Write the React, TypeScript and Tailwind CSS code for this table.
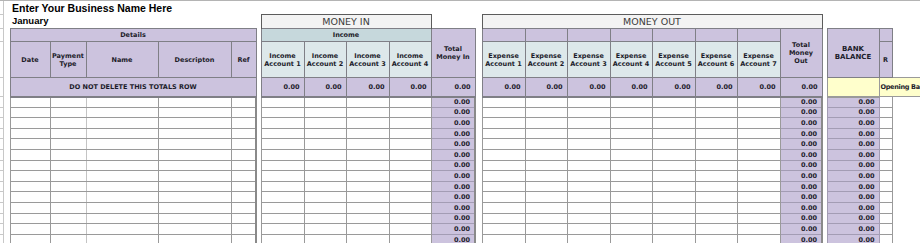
import React from "react";

const FONT = { fontFamily: '"Liberation Sans", Arial, sans-serif' };

const small = "font-['DejaVu_Sans',sans-serif] text-[6.5px] leading-[8px] font-bold text-[#1c1c2a]";
const hd = `border border-[#7f7f86] ${small} text-center align-middle`;
const purple = "bg-[#ccc3de]";
const light = "bg-[#dde8ea]";
const num = `border border-[#7f7f86] bg-[#ccc3de] ${small} text-right pr-1 align-middle`;
const cell = "border border-[#9a9a9a] bg-white";
const stubA = "border-r border-b border-[#c8c8c8]";
const box = "border border-b-0 border-[#5c5c5c] bg-[#f3f3f3] text-center font-['DejaVu_Sans',sans-serif] text-[9.5px] leading-[12px] text-[#3c3c3c]";

const widths = [3, 7, 40, 36, 72, 73, 25, 5, 43, 42, 43, 42, 44, 7, 43, 42, 43, 42, 43, 42, 43, 42, 5, 52, 13, 40];

function Stub() {
    return (
        <>
            <td className={stubA} />
            <td />
        </>
    );
}

export default function App() {
    const rows = Array.from({ length: 14 }, (_, i) => i);
    const expenses = [1, 2, 3, 4, 5, 6, 7];

    return (
        <div className="w-[920px] h-[243px] overflow-hidden bg-white border-t border-[#b4b4b4]" style={FONT}>
            <table className="table-fixed border-collapse w-[932px]">
                <colgroup>
                    {widths.map((w, i) => (
                        <col key={i} style={{ width: w }} />
                    ))}
                </colgroup>
                <tbody>
                    {/* title */}
                    <tr className="h-[13px]">
                        <Stub />
                        <td colSpan={24} className="pl-[2px] pt-[2px] text-[10.5px] leading-[11px] font-bold text-black whitespace-nowrap">
                            Enter Your Business Name Here
                        </td>
                    </tr>

                    {/* month + group boxes */}
                    <tr className="h-[14px]">
                        <Stub />
                        <td colSpan={6} className="pl-[2px] text-[9.5px] leading-[11px] font-bold text-black align-top">
                            January
                        </td>
                        <td colSpan={4} className={box}>MONEY IN</td>
                        <td />
                        <td />
                        <td colSpan={8} className={box}>MONEY OUT</td>
                        <td colSpan={4} />
                    </tr>

                    {/* header row 1 */}
                    <tr className="h-[13px]">
                        <Stub />
                        <td colSpan={5} className={`${hd} ${purple}`}>Details</td>
                        <td />
                        <td colSpan={4} className={`${hd} bg-[#c6d8dc]`}>Income</td>
                        <td rowSpan={2} className={`${hd} ${purple}`}>
                            Total
                            <br />
                            Money In
                        </td>
                        <td />
                        {expenses.map((e) => (
                            <td key={e} className={`${hd} ${purple}`} />
                        ))}
                        <td rowSpan={2} className={`${hd} ${purple}`}>
                            Total
                            <br />
                            Money
                            <br />
                            Out
                        </td>
                        <td />
                        <td rowSpan={2} className={`${hd} ${purple} text-[7px] leading-[8px]`}>
                            BANK
                            <br />
                            BALANCE
                        </td>
                        <td className={`${hd} ${purple}`} />
                        <td />
                    </tr>

                    {/* header row 2 */}
                    <tr className="h-[36px]">
                        <Stub />
                        <td className={`${hd} ${purple}`}>Date</td>
                        <td className={`${hd} ${purple}`}>
                            Payment
                            <br />
                            Type
                        </td>
                        <td className={`${hd} ${purple}`}>Name</td>
                        <td className={`${hd} ${purple}`}>Descripton</td>
                        <td className={`${hd} ${purple}`}>Ref</td>
                        <td />
                        {[1, 2, 3, 4].map((n) => (
                            <td key={n} className={`${hd} ${light} whitespace-nowrap`}>
                                Income
                                <br />
                                Account {n}
                            </td>
                        ))}
                        <td />
                        {expenses.map((n) => (
                            <td key={n} className={`${hd} ${light} whitespace-nowrap`}>
                                Expense
                                <br />
                                Account {n}
                            </td>
                        ))}
                        <td />
                        <td className={`${hd} ${purple}`}>R</td>
                        <td />
                    </tr>

                    {/* totals row */}
                    <tr className="h-[19px]">
                        <Stub />
                        <td colSpan={5} className={`${hd} ${purple} border-b-2 whitespace-nowrap`}>
                            DO NOT DELETE THIS TOTALS ROW
                        </td>
                        <td />
                        {[1, 2, 3, 4, 5].map((n) => (
                            <td key={n} className={`${num} border-b-2`}>0.00</td>
                        ))}
                        <td />
                        {[...expenses, 8].map((n) => (
                            <td key={n} className={`${num} border-b-2`}>0.00</td>
                        ))}
                        <td />
                        <td className="border border-b-2 border-[#9a9a9a] bg-[#ffffcc]" />
                        <td colSpan={2} className={`border border-[#9a9a9a] bg-[#ffffcc] pl-[1px] ${small} tracking-[-0.3px] whitespace-nowrap overflow-hidden`}>
                            Opening Ba
                        </td>
                    </tr>

                    {/* data rows */}
                    {rows.map((r) => (
                        <tr key={r} className="h-[10.6px]">
                            <Stub />
                            <td className={cell} />
                            <td className={`${cell} border-r-[#c4c4c4]`} />
                            <td className={cell} />
                            <td className={cell} />
                            <td className={`${cell} border-r-2 border-r-[#8a8a8a]`} />
                            <td />
                            <td className={cell} />
                            <td className={cell} />
                            <td className={cell} />
                            <td className={cell} />
                            <td className={`${num} border-[#a39cb4] border-r-2 border-r-[#8a8a8a]`}>0.00</td>
                            <td />
                            {expenses.map((e) => (
                                <td key={e} className={cell} />
                            ))}
                            <td className={`${num} border-[#a39cb4] border-r-2 border-r-[#8a8a8a]`}>0.00</td>
                            <td />
                            <td className={`${num} border-[#a39cb4]`}>0.00</td>
                            <td className={cell} />
                            <td />
                        </tr>
                    ))}
                </tbody>
            </table>
        </div>
    );
}
